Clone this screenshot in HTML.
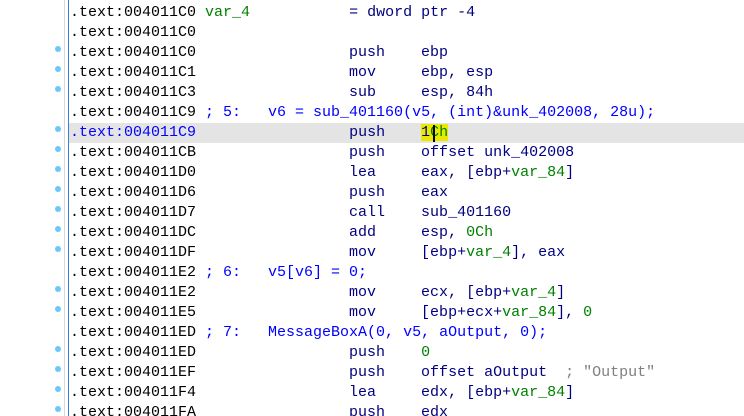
<!DOCTYPE html>
<html><head><meta charset="utf-8"><style>
html,body{margin:0;padding:0;background:#fff;width:744px;height:416px;overflow:hidden;position:relative}
.g1{position:absolute;left:64px;top:0;width:1px;height:416px;background:#d8d8d8}
.g2{position:absolute;left:68px;top:0;width:1px;height:416px;background:#3a7fd0}
.row{position:absolute;left:0;width:744px;height:20px}
.t{position:absolute;left:70px;top:0;font:15px/20px "Liberation Mono",monospace;white-space:pre;color:#000}
.d{position:absolute;left:55px;top:3px;width:6px;height:6px;border-radius:50%;background:#6cc8f8}
.hl{background:#e4e4e4}
.m{color:#000080}.c{color:#0000ff}.n{color:#008000}.s{color:#808080}
.y{background:#e8e800}
.cur{position:absolute;left:433px;top:2px;width:2px;height:17px;background:#000}
</style></head><body>
<div class="g1"></div>
<div class="row" style="top:3px"><div class="t">.text:004011C0 <span class="n">var_4</span>           <span class="m">= dword ptr -4</span></div></div>
<div class="row" style="top:23px"><div class="t">.text:004011C0</div></div>
<div class="row" style="top:43px"><div class="d"></div><div class="t">.text:004011C0                 <span class="m">push    ebp</span></div></div>
<div class="row" style="top:63px"><div class="d"></div><div class="t">.text:004011C1                 <span class="m">mov     ebp, esp</span></div></div>
<div class="row" style="top:83px"><div class="d"></div><div class="t">.text:004011C3                 <span class="m">sub     esp, 84h</span></div></div>
<div class="row" style="top:103px"><div class="t">.text:004011C9 <span class="c">; 5:   v6 = sub_401160(v5, (int)&amp;unk_402008, 28u);</span></div></div>
<div class="row hl" style="top:123px;left:69px;width:675px"></div>
<div class="row" style="top:123px"><div class="d"></div><div class="t"><span class="c">.text:004011C9</span>                 <span class="m">push    </span><span class="y"><span class="m">1</span><span class="n">Ch</span></span></div><div class="cur"></div></div>
<div class="row" style="top:143px"><div class="d"></div><div class="t">.text:004011CB                 <span class="m">push    offset unk_402008</span></div></div>
<div class="row" style="top:163px"><div class="d"></div><div class="t">.text:004011D0                 <span class="m">lea     eax, [ebp+<span class="n">var_84</span>]</span></div></div>
<div class="row" style="top:183px"><div class="d"></div><div class="t">.text:004011D6                 <span class="m">push    eax</span></div></div>
<div class="row" style="top:203px"><div class="d"></div><div class="t">.text:004011D7                 <span class="m">call    sub_401160</span></div></div>
<div class="row" style="top:223px"><div class="d"></div><div class="t">.text:004011DC                 <span class="m">add     esp, <span class="n">0Ch</span></span></div></div>
<div class="row" style="top:243px"><div class="d"></div><div class="t">.text:004011DF                 <span class="m">mov     [ebp+<span class="n">var_4</span>], eax</span></div></div>
<div class="row" style="top:263px"><div class="t">.text:004011E2 <span class="c">; 6:   v5[v6] = 0;</span></div></div>
<div class="row" style="top:283px"><div class="d"></div><div class="t">.text:004011E2                 <span class="m">mov     ecx, [ebp+<span class="n">var_4</span>]</span></div></div>
<div class="row" style="top:303px"><div class="d"></div><div class="t">.text:004011E5                 <span class="m">mov     [ebp+ecx+<span class="n">var_84</span>], <span class="n">0</span></span></div></div>
<div class="row" style="top:323px"><div class="t">.text:004011ED <span class="c">; 7:   MessageBoxA(0, v5, aOutput, 0);</span></div></div>
<div class="row" style="top:343px"><div class="d"></div><div class="t">.text:004011ED                 <span class="m">push    <span class="n">0</span></span></div></div>
<div class="row" style="top:363px"><div class="d"></div><div class="t">.text:004011EF                 <span class="m">push    offset aOutput  </span><span class="s">; "Output"</span></div></div>
<div class="row" style="top:383px"><div class="d"></div><div class="t">.text:004011F4                 <span class="m">lea     edx, [ebp+<span class="n">var_84</span>]</span></div></div>
<div class="row" style="top:403px"><div class="d"></div><div class="t">.text:004011FA                 <span class="m">push    edx</span></div></div>
<div class="g2"></div>
</body></html>
